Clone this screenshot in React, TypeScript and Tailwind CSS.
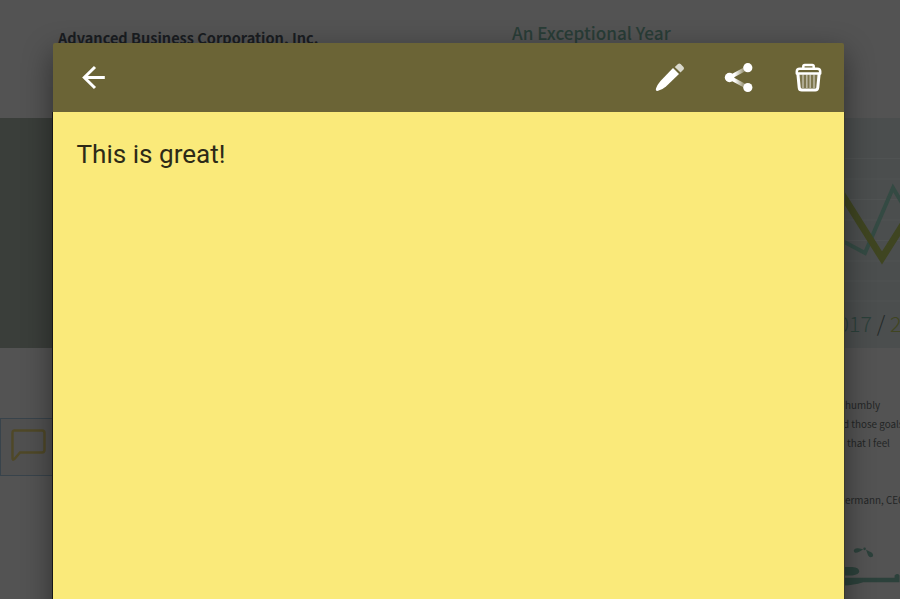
import React from "react";

const cjk = "font-['Noto_Sans_CJK_SC',sans-serif]";

function DocumentPage() {
  return (
    <div className={`flex h-[599px] w-[900px] flex-col overflow-hidden bg-[#535353] ${cjk}`}>
      <header className="flex h-[118px] shrink-0 whitespace-nowrap pl-[58px]">
        <h1 className="w-[454px] pt-[28px] text-[14.55px] leading-[20px] font-bold text-[#1a1d21]">
          Advanced Business Corporation, Inc.
        </h1>
        <h2 className="pt-[23px] text-[17.15px] leading-[20px] font-medium text-[#293d37]">
          An Exceptional Year
        </h2>
      </header>
      <section className="flex h-[230px] shrink-0">
        <div className="w-[440px] bg-[#3a3e3a]" />
        <div className="flex w-[460px] flex-col bg-[#4b4e4e]">
          <svg className="h-[189px] w-[460px] shrink-0" viewBox="440 118 460 189" fill="none">
            <path
              d="M440 158.500H900M440 179H900M440 199.500H900M440 220H900M440 240.500H900M440 261H900M440 281H900M440 301H900"
              stroke="#505353"
            />
            <path d="M820 229L865 253L893 188L905 208" stroke="#344a43" strokeWidth="4" />
            <path d="M825 167L882 258L909 215" stroke="#3f4521" strokeWidth="7" />
          </svg>
          <p className="pl-[386px] text-[21.5px] leading-[31px] font-light whitespace-nowrap text-[#2b403a]">
            2017 <span className="text-[#222827]">/</span> <span className="text-[#404521]">2</span>
          </p>
        </div>
      </section>
      <section className="flex h-[251px] shrink-0 justify-between">
        <div className="mt-[70px] h-[58px] w-[80px] border border-[#38434b] bg-[#505050]">
          <svg className="mt-[10px] ml-[9.5px] h-[36px] w-[36px]" viewBox="0 0 36 36" fill="none">
            <path
              d="M3.500 1.500H31Q33.500 1.500 33.500 4V21Q33.500 23.500 31 23.500H9L3.500 30Q1.500 32 1.500 29V4Q1.500 1.500 3.500 1.500Z"
              stroke="#4f4827"
              strokeWidth="2.400"
            />
          </svg>
        </div>
        <div className="flex w-[60px] flex-col whitespace-nowrap text-[9.85px] leading-[19px] text-[#232626]">
          <p className="mt-[48px] pl-[5px]">humbly</p>
          <p className="pl-[3px]">d those goals</p>
          <p className="pl-[7px]">that I feel</p>
          <p className="mt-[38px] pl-[1.5px]">termann, CEO</p>
          <svg className="mt-[30px] h-[60px] w-[60px]" viewBox="840 540 60 60" fill="#2c413b">
            <path d="M853.500 551Q854 548 858 548.500L863 549.500Q858 553.500 855 553Q853.500 552.500 853.500 551Z" />
            <circle cx="864.500" cy="549" r="1.300" />
            <path d="M866 550L872 553Q874 555.500 872.500 557Q869.500 558.500 868 555.500Z" />
            <path d="M840 567.500H852Q859 568 859 572Q859 575 852 576H840V567.500Z" />
            <path d="M840 578.500H895V576Q898 573 900 576V583H863Q850 587 840 586Z" />
          </svg>
        </div>
      </section>
    </div>
  );
}

function BackIcon() {
  return (
    <svg className="h-[32px] w-[32px]" viewBox="0 0 32 32" fill="none" stroke="#fff" strokeWidth="3">
      <path d="M27.800 15.500H7.500M18 5L7.300 15.500L18 26" />
    </svg>
  );
}

function EditIcon() {
  return (
    <svg className="h-[32px] w-[32px]" viewBox="-1 1 32 32">
      <path d="M19 7L25 13L12 25.500Q8 29 3.500 30Q1.300 30 2 27.500Q3 24 6.500 20Z" fill="#fff" />
      <path d="M20.800 6L24 3Q25.300 1.900 26.600 3L29.500 6Q30.600 7.200 29.500 8.400L26.500 11.500Z" fill="#dad9cd" />
    </svg>
  );
}

function ShareIcon() {
  return (
    <svg className="h-[32px] w-[32px]" viewBox="0 1 32 32">
      <defs>
        <linearGradient id="link" x1="6" x2="25" gradientUnits="userSpaceOnUse">
          <stop offset=".3" stopColor="#fff" />
          <stop offset=".85" stopColor="#fff" stopOpacity=".2" />
        </linearGradient>
      </defs>
      <path d="M25 6.500L6.500 16.500L25 26.500" fill="none" stroke="url(#link)" strokeWidth="4" />
      <g fill="#fff">
        <circle cx="24.800" cy="6.700" r="4.600" />
        <circle cx="6.500" cy="16.500" r="4.700" />
        <circle cx="24.800" cy="26.500" r="4.600" />
      </g>
    </svg>
  );
}

function TrashIcon() {
  return (
    <svg className="h-[32px] w-[32px]" viewBox="0.5 1 32 32" fill="none" stroke="#fff">
      <path d="M6 13H26L24.500 27H7.500Z" fill="#fff" fillOpacity=".12" stroke="none" />
      <path d="M10.500 13.500V27M14.300 13.500V27M17.700 13.500V27M21.500 13.500V27" strokeWidth="1.500" strokeOpacity=".5" />
      <path d="M5.300 12L6.700 26.500Q6.900 29 9.300 29H22.700Q25.100 29 25.300 26.500L26.700 12" strokeWidth="3" />
      <path d="M4.300 12.500V10.500Q4.300 7.800 7.300 7.800H24.700Q27.700 7.800 27.700 10.500V12.500Z" strokeWidth="2.500" strokeLinejoin="round" />
      <path d="M10.800 7.500V5.500Q10.800 4 12.300 4H19.700Q21.200 4 21.200 5.500V7.500" strokeWidth="2.500" />
    </svg>
  );
}

function NoteDialog() {
  return (
    <div className="absolute top-[43px] left-[53px] flex h-[580px] w-[790.5px] flex-col rounded-t-[2px] shadow-[0_10px_30px_rgba(0,0,0,0.45)]">
      <header className="flex h-[69px] shrink-0 items-center justify-between rounded-t-[2px] bg-[#6b6436] pr-[18.5px] pl-[24px]">
        <button aria-label="Back" className="flex">
          <BackIcon />
        </button>
        <div className="flex gap-[38px]">
          <button aria-label="Edit" className="flex"><EditIcon /></button>
          <button aria-label="Share" className="flex"><ShareIcon /></button>
          <button aria-label="Delete" className="flex"><TrashIcon /></button>
        </div>
      </header>
      <div className="grow bg-[#faea7a] px-[23.5px] pt-[26px] shadow-[-1px_0_0_#171717,1px_0_0_#3b3a2c]">
        <p className="font-[Roboto,sans-serif] text-[26.1px] leading-[32px] text-[#2d2a17]">This is great!</p>
      </div>
    </div>
  );
}

export default function App() {
  return (
    <main className="relative h-[599px] w-[900px] overflow-hidden">
      <DocumentPage />
      <NoteDialog />
    </main>
  );
}
